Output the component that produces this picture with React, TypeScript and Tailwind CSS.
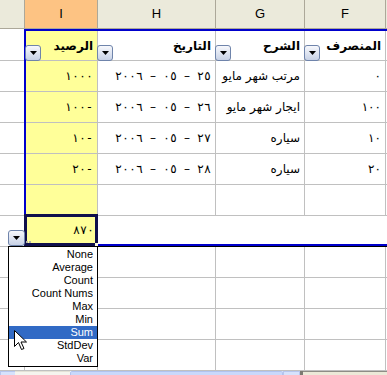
import type { ReactNode } from "react";

type Row = { bal: string; date: string; desc: string; out: string };

const rows: Row[] = [
  { bal: "١٠٠٠", date: "٢٠٠٦ – ٠٥ – ٢٥", desc: "مرتب شهر مايو", out: "٠" },
  { bal: "١٠٠-", date: "٢٠٠٦ – ٠٥ – ٢٦", desc: "ايجار شهر مايو", out: "١٠٠" },
  { bal: "١٠-", date: "٢٠٠٦ – ٠٥ – ٢٧", desc: "سياره", out: "١٠" },
  { bal: "٢٠-", date: "٢٠٠٦ – ٠٥ – ٢٨", desc: "سياره", out: "٢٠" },
  { bal: "", date: "", desc: "", out: "" },
];

const totals = ["None", "Average", "Count", "Count Nums", "Max", "Min", "Sum", "StdDev", "Var"];

const FilterButton = ({ className = "" }: { className?: string }) => (
  <div
    className={`absolute flex items-center justify-center rounded-[3px] border border-[#6f84ab] bg-linear-to-b from-[#f7f8fc] to-[#c8d2e6] ${className}`}
  >
    <svg width="7" height="4" viewBox="0 0 7 4">
      <path d="M0 0h7L3.5 4z" fill="#000" />
    </svg>
  </div>
);

// the arabic digits in the sheet are set wider than DejaVu draws them,
// so each character gets a fixed slot, written in on-screen order
const slot = (c: string) => {
  if (c === " ") return "w-[6px]";
  if (c === "–") return "w-[8px]";
  if (c === "-") return "w-[7px]";
  return "w-[7px]";
};

const Spaced = ({ text }: { text: string }) => (
  <span dir="ltr" className="flex [unicode-bidi:bidi-override]">
    {Array.from(text).map((c, i) => (
      <span key={i} className={`inline-block text-center ${slot(c)}`}>
        {c === " " ? "\u00a0" : c}
      </span>
    ))}
  </span>
);

const Visual = ({ children }: { children: ReactNode }) => (
  <span dir="ltr" className="[unicode-bidi:bidi-override]">
    {children}
  </span>
);

const Cell = ({ w, children, className = "" }: { w: string; children?: ReactNode; className?: string }) => (
  <div className={`flex shrink-0 items-center justify-end border-r border-[#c0c0c0] pr-[4px] ${w} ${className}`}>
    {children}
  </div>
);

const BlankRow = () => (
  <div className="flex h-[31px] border-b border-[#c0c0c0]">
    <div className="w-[25px] shrink-0 border-r border-[#c0c0c0]" />
    <div className="w-[73px] shrink-0 border-r border-[#c0c0c0]" />
    <div className="w-[118px] shrink-0 border-r border-[#c0c0c0]" />
    <div className="w-[89px] shrink-0 border-r border-[#c0c0c0]" />
    <div className="w-[81px] shrink-0 border-r border-[#c0c0c0]" />
    <div className="flex-1" />
  </div>
);

export default function App() {
  return (
    <div className="relative h-[375px] w-[387px] overflow-hidden bg-white font-['DejaVu_Sans',sans-serif] text-[12px] text-black">
      {/* column letters */}
      <div className="flex h-[29px] border-b border-[#aca899] bg-[#ebeadb] font-['Liberation_Sans',sans-serif] text-[13px]">
        <div className="w-[25px] shrink-0 border-r border-[#aca899]" />
        <div className="flex w-[73px] shrink-0 items-center justify-center border-r border-[#aca899] bg-[#fdc383]">I</div>
        <div className="flex w-[118px] shrink-0 items-center justify-center border-r border-[#aca899]">H</div>
        <div className="flex w-[89px] shrink-0 items-center justify-center border-r border-[#aca899]">G</div>
        <div className="flex w-[81px] shrink-0 items-center justify-center border-r border-[#aca899]">F</div>
        <div className="flex-1" />
      </div>

      <div className="flex items-start">
        {/* partial column on the left */}
        <div className="flex w-[24px] shrink-0 flex-col">
          <div className="h-[32px] border-b border-[#c0c0c0]" />
          {[0, 1, 2, 3, 4, 5].map((i) => (
            <div key={i} className="h-[31px] border-b border-[#c0c0c0]" />
          ))}
        </div>

        {/* the list */}
        <div className="flex-1">
          <div className="border-l-2 border-t-2 border-b-2 border-[#0000cc]">
            <div className="flex h-[30px] border-b border-[#c0c0c0] font-bold">
              <Cell w="w-[72px] relative bg-[#ffff99]">
                الرصيد
                <FilterButton className="bottom-[-1px] left-[-1px] h-[16px] w-[16px]" />
              </Cell>
              <Cell w="w-[118px] relative">
                التاريخ
                <FilterButton className="bottom-[-1px] left-[-1px] h-[16px] w-[16px]" />
              </Cell>
              <Cell w="w-[89px] relative">
                الشرح
                <FilterButton className="bottom-[-1px] left-[-1px] h-[16px] w-[16px]" />
              </Cell>
              <Cell w="w-[81px] relative">
                المنصرف
                <FilterButton className="bottom-[-1px] left-[-1px] h-[16px] w-[16px]" />
              </Cell>
              <div className="flex-1" />
            </div>

            {rows.map((r, i) => (
              <div key={i} className="flex h-[31px] border-b border-[#c0c0c0]">
                <Cell w="w-[72px] bg-[#ffff99]" className="pr-[3px]">
                  <Spaced text={r.bal} />
                </Cell>
                <Cell w="w-[118px]" className="pr-[2px]">
                  <Spaced text={r.date} />
                </Cell>
                <Cell w="w-[89px]" className="pr-[2px]">
                  <span dir="rtl">{r.desc}</span>
                </Cell>
                <Cell w="w-[81px]">
                  <Visual>{r.out}</Visual>
                </Cell>
                <div className="flex-1" />
              </div>
            ))}

            {/* total row */}
            <div className="flex h-[28px]">
              <Cell w="w-[72px] bg-[#ffff99]" className="border-r-0 pr-[3px]">
                <Spaced text="٨٧٠" />
              </Cell>
              <div className="flex-1" />
            </div>
          </div>
          <div className="h-[1px] bg-black" />
        </div>
      </div>

      <BlankRow />
      <BlankRow />
      <BlankRow />
      <BlankRow />

      {/* horizontal scroll bar, mostly cut off */}
      <div className="flex h-[4px]">
        <div className="w-[15px] border-t border-l border-[#b6c6ee] bg-[#d6e2fc]" />
        <div className="w-[55px] border-t border-[#e3e1d6] bg-[#f5f4ee]" />
        <div className="w-[213px] rounded-t-[2px] border-t border-x border-[#b0c3ef] bg-[#c9d8fb]" />
        <div className="w-[17px] border-t border-x border-[#b6c6ee] bg-[#d6e2fc]" />
        <div className="w-[3px] bg-[#7b7a72]" />
        <div className="flex-1 border-t border-[#8e8d86] bg-[#ece9d8]" />
      </div>

      {/* selected total cell */}
      <div className="absolute left-[24px] top-[214px] h-[32px] w-[74px] border-[3px] border-[#10104c]" />
      <div className="absolute left-[95px] top-[243px] h-[3px] w-[3px] bg-[#fffde0]" />

      {/* total row dropdown */}
      <FilterButton className="left-[8px] top-[230px] h-[16px] w-[17px]" />
      <div className="absolute left-[26px] top-[241px] flex gap-[1px]">
        <div className="h-[2px] w-[2px] bg-[#b5b3a8]" />
        <div className="h-[2px] w-[2px] bg-[#b5b3a8]" />
      </div>

      <div className="absolute left-[8px] top-[246px] w-[90px] border border-black bg-white py-[1px] font-['Liberation_Sans',sans-serif] text-[11px] leading-[13px]">
        {totals.map((t) => (
          <div key={t} className={`h-[13px] pr-[4px] text-right ${t === "Sum" ? "bg-[#316ac5] text-white" : ""}`}>
            {t}
          </div>
        ))}
      </div>

      {/* mouse pointer */}
      <svg className="absolute left-[14px] top-[330px]" width="13" height="21" viewBox="0 0 13 21">
        <path d="M0.5 0.5v16l4-4 3 7 2.5-1-3-6.5h5.5z" fill="#fff" stroke="#000" strokeWidth="1" strokeLinejoin="miter" />
      </svg>
    </div>
  );
}
